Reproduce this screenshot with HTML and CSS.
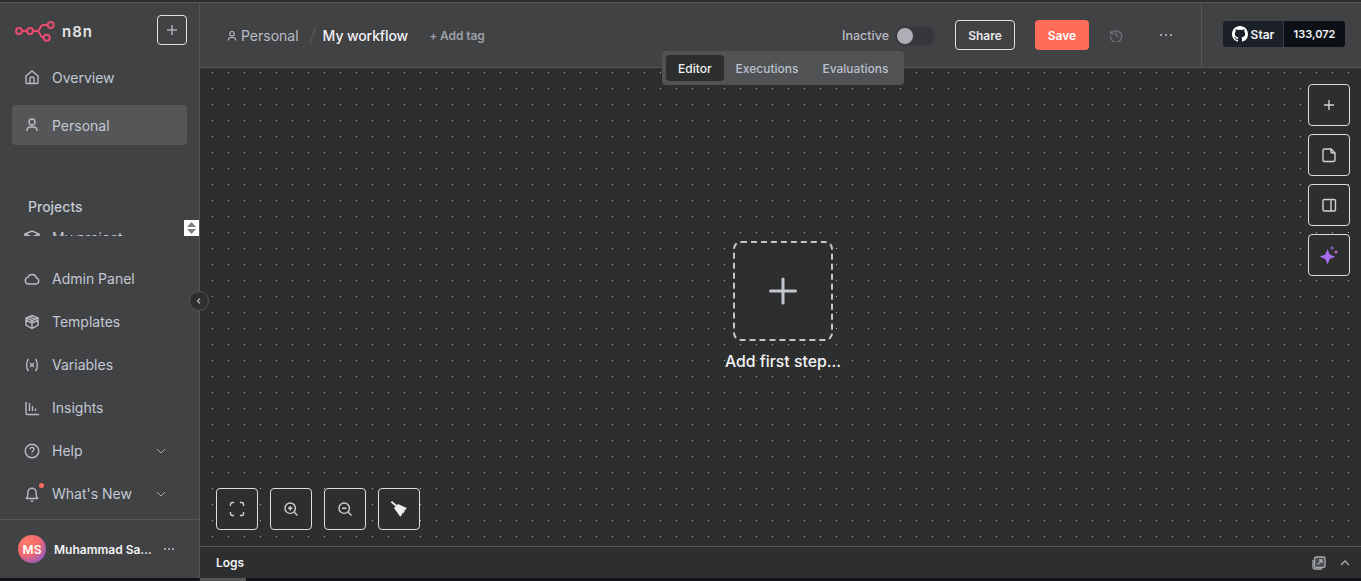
FILE: index.html
```html
<!DOCTYPE html>
<html>
<head>
  <title>My workflow - n8n</title>
  <link rel="stylesheet" href="styles.css">
</head>
<body>
<div class="app">
  <aside class="sidebar">
    <div class="brand">
      <svg class="logo" width="40" height="24" viewBox="0 0 40 24" fill="none" stroke="#ea4b71" stroke-width="2">
        <circle cx="4" cy="12" r="3"/>
        <circle cx="15" cy="12" r="3"/>
        <circle cx="35.700" cy="6" r="3"/>
        <circle cx="31.700" cy="18.700" r="3"/>
        <path d="M7 12h5M18 12h4c3.500 0 2.500-6 6.500-6h4.200M22 12c3.500 0 2.500 6.700 6.700 6.700"/>
      </svg>
      <span class="brand-name">n8n</span>
      <button class="brand-add">
        <svg width="14" height="14" viewBox="0 0 14 14" stroke="#aeb0b8" stroke-width="1.500"><path d="M7 2v10M2 7h10"/></svg>
      </button>
    </div>

    <a class="nav-item overview">
      <svg class="nav-icon" viewBox="0 0 16 16" fill="none"><path d="M2 7l6-5 6 5v6.500a1 1 0 0 1-1 1H3a1 1 0 0 1-1-1z"/><path d="M6 14.500V10a2 2 0 0 1 4 0v4.500"/></svg>
      Overview
    </a>
    <a class="nav-item active">
      <svg class="nav-icon" viewBox="0 0 16 16" fill="none"><circle cx="8" cy="5" r="3"/><path d="M3 14v-1a3.500 3.500 0 0 1 3.500-3h3a3.500 3.500 0 0 1 3.500 3v1"/></svg>
      Personal
    </a>

    <div class="projects">
      <div class="projects-title">Projects</div>
      <div class="projects-list">
        <a class="nav-item">
          <svg class="nav-icon" viewBox="0 0 16 16" fill="none"><path d="M1 5l7-3 7 3-7 3zM1 5v6l7 3 7-3V5"/></svg>
          My project
        </a>
      </div>
      <div class="scroll-arrows">
        <svg width="15" height="16" viewBox="0 0 15 16" fill="#7f7f7f"><path d="M7.500 2l4.500 5H3zM3 9h9l-4.500 5z"/></svg>
      </div>
    </div>

    <a class="nav-item low">
      <svg class="nav-icon" viewBox="0 0 16 16" fill="none"><path d="M4.500 13a3.500 3.500 0 0 1-.5-6.900 4.500 4.500 0 0 1 8.500 1A3 3 0 0 1 12 13z"/></svg>
      Admin Panel
    </a>
    <a class="nav-item low">
      <svg class="nav-icon" viewBox="0 0 16 16" fill="none"><path d="M8 1.500l6 2.500v2.500L8 9 2 6.500V4zM2 4l6 2.500L14 4M8 6.500V9M2 6.500V11l6 3.500 6-3.500V6.500M8 9v5.500M5 2.800l6 2.500"/></svg>
      Templates
    </a>
    <a class="nav-item low">
      <svg class="nav-icon" viewBox="0 0 16 16" fill="none"><path d="M4.500 2C2 5 2 11 4.500 14M11.500 2c2.500 3 2.500 9 0 12M6 6l4 4M10 6l-4 4"/></svg>
      Variables
    </a>
    <a class="nav-item low">
      <svg class="nav-icon" viewBox="0 0 16 16" fill="none"><path d="M2 2v11.500a1 1 0 0 0 1 1h12M5.500 3v8M8.500 6v5M11.500 8.500V11"/></svg>
      Insights
    </a>
    <a class="nav-item low">
      <svg class="nav-icon" viewBox="0 0 16 16" fill="none"><circle cx="8" cy="8" r="6.800"/><path d="M6 6.200a2 2 0 1 1 3 1.800c-.7.400-1 .8-1 1.500M8 11.500v.5"/></svg>
      Help
      <svg class="chevron" width="12" height="12" viewBox="0 0 12 12" fill="none"><path d="M2 4l4 4 4-4"/></svg>
    </a>
    <a class="nav-item low">
      <span class="bell">
        <svg class="nav-icon" viewBox="0 0 16 16" fill="none"><path d="M2 12.500c1-.5 1.800-1.500 1.800-3.500V6.500a4.200 4.200 0 0 1 8.400 0V9c0 2 .8 3 1.800 3.500zM6.800 15h2.400"/></svg>
        <i class="bell-dot"></i>
      </span>
      What's New
      <svg class="chevron" width="12" height="12" viewBox="0 0 12 12" fill="none"><path d="M2 4l4 4 4-4"/></svg>
    </a>

    <div class="user">
      <div class="avatar">MS</div>
      <span class="user-name">Muhammad Sa...</span>
      <span class="dots">
        <i></i><i></i><i></i>
      </span>
    </div>
    <button class="collapse">
      <svg width="8" height="8" viewBox="0 0 8 8" fill="none" stroke="#b5b7be" stroke-width="1.200"><path d="M5 1.500L2.500 4 5 6.500"/></svg>
    </button>
  </aside>

  <main class="main">
    <header class="topbar">
      <div class="crumbs">
        <svg width="12" height="12" viewBox="0 0 16 16" fill="none" stroke="#b5b7be" stroke-width="1.500"><circle cx="8" cy="5" r="3"/><path d="M3 14v-1a3.500 3.500 0 0 1 3.500-3h3a3.500 3.500 0 0 1 3.500 3v1"/></svg>
        <span class="crumb-project">Personal</span>
        <span class="crumb-sep"></span>
        <span class="crumb-name">My workflow</span>
        <span class="add-tag">+ Add tag</span>
      </div>
      <div class="actions">
        <span class="status">Inactive</span>
        <span class="toggle"><i></i></span>
        <button class="btn-share">Share</button>
        <button class="btn-save">Save</button>
        <svg class="history" width="14" height="14" viewBox="0 0 16 16" fill="none" stroke="#6c6d72" stroke-width="1.600"><path d="M2 3v3.500h3.500M2.300 6.500A6.500 6.500 0 1 1 1.500 9M8 4.500V8l2.500 1.500"/></svg>
        <span class="dots more"><i></i><i></i><i></i></span>
      </div>
      <div class="star-wrap">
        <div class="github">
          <span class="github-star">
            <svg width="16" height="16" viewBox="0 0 16 16" fill="#fff"><path d="M8 0C3.580 0 0 3.580 0 8c0 3.540 2.290 6.530 5.470 7.590.4.070.55-.17.55-.38 0-.19-.01-.82-.01-1.490-2.010.37-2.530-.49-2.690-.94-.09-.23-.48-.94-.82-1.130-.28-.15-.68-.52-.01-.53.63-.01 1.080.58 1.230.82.720 1.210 1.870.87 2.330.66.070-.52.280-.87.510-1.070-1.780-.2-3.640-.89-3.640-3.950 0-.87.310-1.590.820-2.150-.08-.2-.36-1.020.08-2.120 0 0 .67-.21 2.200.82.640-.18 1.320-.27 2-.27s1.360.09 2 .27c1.530-1.040 2.200-.82 2.200-.82.440 1.100.160 1.920.08 2.120.51.560.82 1.270.82 2.150 0 3.070-1.870 3.750-3.650 3.950.29.250.54.730.54 1.480 0 1.070-.01 1.930-.01 2.200 0 .21.150.46.55.38A8.010 8.010 0 0 0 16 8c0-4.420-3.580-8-8-8z"/></svg>
            Star
          </span>
          <span class="github-count">133,072</span>
        </div>
      </div>
    </header>

    <section class="canvas">
      <div class="tabs">
        <span class="tab current">Editor</span>
        <span class="tab">Executions</span>
        <span class="tab">Evaluations</span>
      </div>

      <div class="tools-right">
        <button class="tool">
          <svg width="16" height="16" viewBox="0 0 16 16" fill="none"><path d="M8 3v10M3 8h10"/></svg>
        </button>
        <button class="tool">
          <svg width="16" height="16" viewBox="0 0 16 16" fill="none"><path d="M3.500 2H10l4 4v7a1.500 1.500 0 0 1-1.500 1.500h-9A1.500 1.500 0 0 1 2 13V3.500A1.500 1.500 0 0 1 3.500 2zM10 2v3a1 1 0 0 0 1 1h3"/></svg>
        </button>
        <button class="tool">
          <svg width="16" height="16" viewBox="0 0 16 16" fill="none"><rect x="2" y="2.500" width="12.500" height="11.500" rx="1.500"/><path d="M10 2.500V14"/></svg>
        </button>
        <button class="tool">
          <svg class="solid" width="20" height="20" viewBox="0 0 20 20" fill="#a56ff0"><path d="M8.500 4l2.200 5.500 5.600 2.200-5.600 2.200-2.200 5.600-2.200-5.600-5.600-2.200 5.600-2.200z"/><path d="M13 .5l.6 1.900 1.900.6-1.900.6-.6 1.900-.6-1.900-1.900-.6 1.900-.6z"/><circle cx="17" cy="7" r="1.500" fill="#b668b5"/></svg>
        </button>
      </div>

      <div class="first-step">
        <button class="add-box">
          <svg width="30" height="30" viewBox="0 0 30 30" fill="none" stroke="#c3c6ce" stroke-width="3" stroke-linecap="round"><path d="M15 3v24M2.500 15h25"/></svg>
        </button>
        <div class="first-label">Add first step...</div>
      </div>

      <div class="tools-bottom">
        <button class="tool">
          <svg width="16" height="16" viewBox="0 0 16 16" fill="none"><path d="M1.500 5V3a1.500 1.500 0 0 1 1.500-1.500h2M11 1.500h2A1.500 1.500 0 0 1 14.500 3v2M14.500 11v2a1.500 1.500 0 0 1-1.500 1.500h-2M5 14.500H3A1.500 1.500 0 0 1 1.500 13v-2"/></svg>
        </button>
        <button class="tool">
          <svg width="16" height="16" viewBox="0 0 16 16" fill="none"><circle cx="7.200" cy="7.200" r="5.200"/><path d="M11 11l3.500 3.500M7.200 5v4.400M5 7.200h4.400"/></svg>
        </button>
        <button class="tool">
          <svg width="16" height="16" viewBox="0 0 16 16" fill="none"><circle cx="7.200" cy="7.200" r="5.200"/><path d="M11 11l3.500 3.500M5 7.200h4.400"/></svg>
        </button>
        <button class="tool">
          <svg class="solid" width="18" height="18" viewBox="0 0 18 18" fill="#eeeef0"><path d="M.7 2.200l1.300-1.200 5 4.200-1.400 1.400z"/><path d="M8 4l8.700 4-1.500 2.500-1.200-.5.700 1.500-1.700 2-1-.8.200 1.700-2 2.300L4 8z"/></svg>
        </button>
      </div>
    </section>

    <footer class="logs">
      <span class="logs-title">Logs</span>
      <svg class="logs-pop" width="14" height="14" viewBox="0 0 14 14" fill="none" stroke="#a9abb2" stroke-width="1.300"><rect x="2.500" y="1" width="10.500" height="10.500" rx="1.500" fill="#a9abb2" fill-opacity=".25"/><path d="M1 4v7.500A1.500 1.500 0 0 0 2.500 13H10M5.500 8.500L10 4M7 4h3v3"/></svg>
      <svg width="12" height="12" viewBox="0 0 12 12" fill="none" stroke="#a9abb2" stroke-width="1.300"><path d="M2 8l4-4 4 4"/></svg>
    </footer>
  </main>
</div>
<div class="page-scroll"><span class="page-thumb"></span></div>
</body>
</html>
```

FILE: styles.css
```css
/* n8n workflow editor, dark theme */
* {
  box-sizing: border-box;
}

html, body {
  margin: 0;
  height: 100%;
  overflow: hidden;
}

body {
  font-family: Inter, "Liberation Sans", sans-serif;
  background: #131418;
  color: #c8cad2;
  font-size: 14px;
}

button {
  font-family: inherit;
  cursor: pointer;
  padding: 0;
}

.app {
  display: flex;
  height: 578px;
  border-top: 2px solid #2d2e2e;
  position: relative;
}

.page-scroll {
  height: 3px;
  padding-left: 200px;
}

.page-thumb {
  display: block;
  width: 46px;
  height: 3px;
  background: #555658;
}

/* sidebar */
.sidebar {
  width: 200px;
  flex: none;
  background: #414244;
  border-right: 1px solid #555658;
  border-top: 1px solid #555658;
  position: relative;
  display: flex;
  flex-direction: column;
}

.brand {
  display: flex;
  align-items: center;
  flex: none;
  height: 42px;
  margin: 6px 0 2px;
  padding: 0 12px 0 15px;
}

.logo {
  flex: none;
  margin-top: 2px;
}

.brand-name {
  margin: 2px 0 0 7px;
  font-size: 15px;
  font-weight: 600;
  letter-spacing: 1px;
  color: #e3e3e5;
}

.brand-add {
  margin-left: auto;
  width: 30px;
  height: 30px;
  background: transparent;
  border: 1px solid #e1e2e5;
  border-radius: 4px;
  display: flex;
  align-items: center;
  justify-content: center;
}

.nav-item {
  display: flex;
  align-items: center;
  height: 40px;
  margin: 5px 12px 0;
  padding-left: 12px;
  color: #c3c9d5;
  font-size: 14px;
  border-radius: 4px;
  flex: none;
}

.nav-item.overview {
  margin-top: 4px;
}

.nav-item.active {
  background: #555658;
  margin-top: 8px;
}

.nav-item.low {
  height: 43px;
  margin-top: 0;
}

.nav-icon {
  width: 16px;
  height: 16px;
  margin-right: 12px;
  flex: none;
  stroke: #b9bbc2;
  stroke-width: 1.400;
}

.chevron {
  margin-left: auto;
  margin-right: 20px;
  stroke: #a9abb2;
  stroke-width: 1;
}

.bell {
  position: relative;
  display: flex;
}

.bell-dot {
  position: absolute;
  top: -3px;
  left: 15px;
  width: 5px;
  height: 5px;
  border-radius: 50%;
  background: #ff6d5a;
}

.projects {
  position: relative;
  height: 70px;
  margin-top: 42px;
  flex: none;
}

.projects-title {
  padding: 10px 0 0 28px;
  font-size: 14px;
  font-weight: 500;
  color: #c3c9d5;
  line-height: 20px;
}

.projects-list {
  height: 19px;
  overflow: hidden;
}

.projects-list .nav-item {
  margin: 0 12px;
  height: 40px;
}

.scroll-arrows {
  position: absolute;
  right: 0;
  top: 33px;
  width: 15px;
  height: 16px;
  background: #fff;
  display: flex;
}

.user {
  margin-top: auto;
  flex: none;
  height: 59px;
  border-top: 1px solid #555658;
  display: flex;
  align-items: center;
  padding: 0 0 0 18px;
}

.avatar {
  width: 28px;
  height: 28px;
  border-radius: 50%;
  background: radial-gradient(circle at 30% 25%, #ff7a68 0%, #f0686a 45%, #9a5cc0 80%, #6a58c8 100%);
  color: #fff;
  font-size: 12px;
  font-weight: 600;
  display: flex;
  align-items: center;
  justify-content: center;
  flex: none;
}

.user-name {
  margin-left: 8px;
  width: 100px;
  font-size: 12px;
  font-weight: 600;
  color: #f2f3f5;
  white-space: nowrap;
}

.dots {
  display: inline-flex;
  gap: 2px;
  margin-left: 10px;
}

.dots i {
  width: 2px;
  height: 2px;
  background: #c5c7cd;
  border-radius: 50%;
}

.collapse {
  position: absolute;
  right: -10px;
  top: 288px;
  width: 20px;
  height: 20px;
  border-radius: 50%;
  background: #2d2e2e;
  border: 1px solid #555658;
  display: flex;
  align-items: center;
  justify-content: center;
  z-index: 2;
}

/* main column */
.main {
  flex: 1;
  min-width: 0;
  display: flex;
  flex-direction: column;
}

.topbar {
  height: 66px;
  flex: none;
  background: #414244;
  border-top: 1px solid #555658;
  border-bottom: 1px solid #555658;
  display: flex;
  align-items: center;
  padding-left: 26px;
}

.crumbs {
  display: flex;
  align-items: center;
  margin-top: 1px;
}

.crumb-project {
  margin-left: 3px;
  color: #b9bcc4;
}

.crumb-sep {
  width: 1px;
  height: 18px;
  margin: 0 10px 0 13px;
  background: #5c5d60;
  transform: rotate(18deg);
}

.crumb-name {
  color: #f0f1f4;
  font-weight: 500;
  letter-spacing: -.1px;
}

.add-tag {
  margin-left: 21px;
  font-size: 12px;
  font-weight: 600;
  color: #9da0a8;
  letter-spacing: -.1px;
}

.actions {
  margin-left: auto;
  display: flex;
  align-items: center;
  height: 100%;
}

.status {
  font-size: 12.500px;
  font-weight: 500;
  color: #b9bcc4;
  margin-right: 6px;
}

.toggle {
  width: 40px;
  height: 20px;
  border-radius: 10px;
  background: #36373a;
  border: 1px solid #3b3c3f;
  display: flex;
  align-items: center;
  padding-left: 1px;
  margin-right: 20px;
  margin-top: 1px;
}

.toggle i {
  width: 16px;
  height: 16px;
  border-radius: 50%;
  background: #aeafb6;
}

.btn-share,
.btn-save {
  height: 30px;
  border-radius: 4px;
  font-size: 12px;
  font-weight: 600;
}

.btn-share {
  width: 60px;
  background: transparent;
  border: 1px solid #e1e2e5;
  color: #e8e9ec;
}

.btn-save {
  width: 54px;
  margin-left: 20px;
  background: #ff6d5a;
  border: none;
  color: #fff;
}

.history {
  margin-left: 20px;
}

.more {
  gap: 3px;
  margin: 0 29px 0 37px;
}

.star-wrap {
  width: 160px;
  height: 100%;
  border-left: 1px solid #555658;
  display: flex;
  align-items: center;
  padding-left: 21px;
}

.github {
  display: flex;
  height: 26px;
  width: 122px;
  border-radius: 3px;
  overflow: hidden;
  font-size: 12px;
  font-weight: 600;
  color: #f0f3f6;
  margin-top: -2px;
}

.github-star {
  width: 61px;
  background: #1c2129;
  border-right: 1px solid #3a3f47;
  display: flex;
  align-items: center;
  justify-content: center;
  gap: 3px;
}

.github-count {
  flex: 1;
  background: #0c0f15;
  font-size: 11px;
  display: flex;
  align-items: center;
  justify-content: center;
}

/* canvas */
.canvas {
  flex: 1;
  position: relative;
  background-color: #2d2e2e;
  background-image: radial-gradient(circle at .5px .5px, #b4b4b4 .6px, transparent .7px);
  background-size: 16px 16px;
  background-position: 12px 4px;
}

.tabs {
  position: absolute;
  top: -17px;
  left: 462px;
  height: 34px;
  padding: 4px;
  display: flex;
  background: #515254;
  border-radius: 4px;
  font-size: 12px;
  font-weight: 500;
  color: #b9c0cf;
  z-index: 2;
}

.tab {
  display: flex;
  align-items: center;
  padding: 0 12px;
  border-radius: 4px;
}

.tab.current {
  background: #2d2e2e;
  color: #f0f1f4;
}

.tool {
  width: 42px;
  height: 42px;
  background: #2d2e2e;
  border: 1px solid #dcdde0;
  border-radius: 4px;
  display: flex;
  align-items: center;
  justify-content: center;
}

.tool svg {
  stroke: #d0d1d6;
  stroke-width: 1.400;
}

.tool svg.solid {
  stroke: none;
}

.tools-right {
  position: absolute;
  top: 16px;
  right: 11px;
  display: flex;
  flex-direction: column;
  gap: 8px;
}

.tools-bottom {
  position: absolute;
  left: 16px;
  bottom: 16px;
  display: flex;
  gap: 12px;
}

.first-step {
  position: absolute;
  left: 483px;
  top: 173px;
  width: 200px;
  display: flex;
  flex-direction: column;
  align-items: center;
}

.add-box {
  width: 100px;
  height: 100px;
  background: #2d2e2e;
  border: 2px dashed #c3c6ce;
  border-radius: 8px;
  display: flex;
  align-items: center;
  justify-content: center;
}

.first-label {
  margin-top: 11px;
  font-size: 15.800px;
  font-weight: 500;
  line-height: 20px;
  color: #f2f3f6;
}

/* logs bar */
.logs {
  height: 32px;
  flex: none;
  background: #2d2e2e;
  border-top: 1px solid #555658;
  display: flex;
  align-items: center;
  padding: 0 10px 0 16px;
  gap: 13px;
}

.logs-title {
  font-size: 12px;
  font-weight: 600;
  color: #f0f1f4;
  margin-right: auto;
}
```
